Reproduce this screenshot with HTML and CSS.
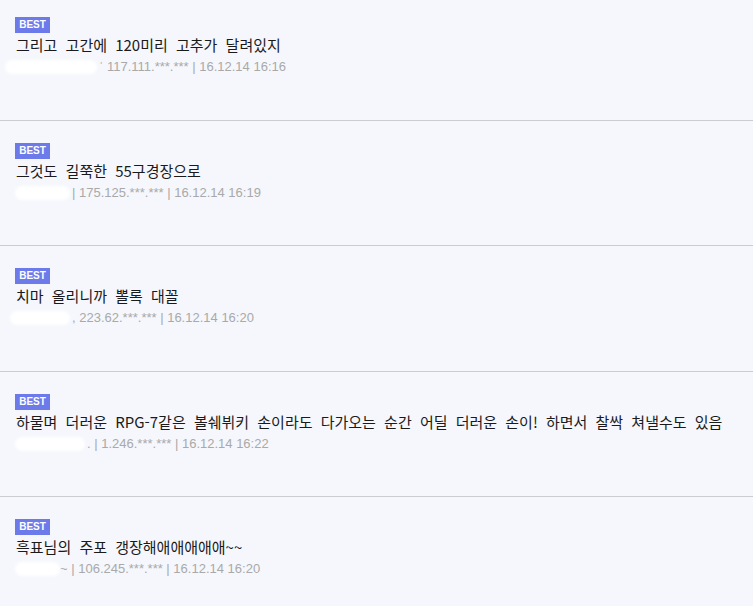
FILE: index.html
```html
<!DOCTYPE html>
<html lang="ko">
<head>
    <meta charset="UTF-8">
    <meta name="viewport" content="width=device-width, initial-scale=1.0">
    <title>베스트 댓글</title>
    <link rel="stylesheet" href="styles.css">
</head>
<body>
    <ul class="comments">
        <li class="comment">
            <span class="badge">BEST</span>
            <p class="text">그리고 고간에 120미리 고추가 달려있지</p>
            <div class="meta"><span class="nick nick-a"></span>ˈ 117.111.***.*** | 16.12.14 16:16</div>
        </li>
        <li class="comment">
            <span class="badge">BEST</span>
            <p class="text">그것도 길쭉한 55구경장으로</p>
            <div class="meta"><span class="nick nick-b"></span>| 175.125.***.*** | 16.12.14 16:19</div>
        </li>
        <li class="comment">
            <span class="badge">BEST</span>
            <p class="text">치마 올리니까 뽈록 대꼴</p>
            <div class="meta"><span class="nick nick-c"></span>, 223.62.***.*** | 16.12.14 16:20</div>
        </li>
        <li class="comment">
            <span class="badge">BEST</span>
            <p class="text">하물며 더러운 RPG-7같은 볼쉐뷔키 손이라도 다가오는 순간 어딜 더러운 손이! 하면서 찰싹 쳐낼수도 있음</p>
            <div class="meta"><span class="nick nick-d"></span>. | 1.246.***.*** | 16.12.14 16:22</div>
        </li>
        <li class="comment">
            <span class="badge">BEST</span>
            <p class="text">흑표님의 주포 갱장해애애애애애~~</p>
            <div class="meta"><span class="nick nick-e"></span>~ | 106.245.***.*** | 16.12.14 16:20</div>
        </li>
    </ul>
</body>
</html>
```

FILE: styles.css
```css
body {
    margin: 0;
    padding: 0;
    background-color: #f5f7fc;
    font-family: "Noto Sans CJK KR", "Noto Sans", sans-serif;
    overflow: hidden;
}
.comments {
    list-style: none;
    margin: -5px 0 0 0;
    padding: 0;
}
.comment {
    box-sizing: border-box;
    height: 125.5px;
    padding: 22px 16px 0 15px;
    border-bottom: 1px solid #c9ccd3;
}
.badge {
    display: block;
    width: 35px;
    height: 16px;
    line-height: 16px;
    text-align: center;
    background-color: #6c7be9;
    color: #ffffff;
    font-family: "Liberation Sans", Arial, sans-serif;
    font-size: 10px;
    font-weight: 700;
}
.text {
    margin: 3px 0 0 1px;
    font-size: 15px;
    line-height: 18px;
    word-spacing: 4px;
    color: #1a1a1a;
    white-space: nowrap;
}
.meta {
    margin-top: 4px;
    font-family: "Liberation Sans", Arial, sans-serif;
    font-size: 13px;
    line-height: 18px;
    color: #a9a9a9;
    white-space: nowrap;
}
.nick {
    display: inline-block;
    height: 14px;
    margin-right: 2px;
    vertical-align: -3px;
    background-color: #ffffff;
    border-radius: 7px;
    filter: blur(1.5px);
}
.nick-a { width: 92px; margin-left: -10px; }
.nick-b { width: 55px; }
.nick-c { width: 60px; margin-left: -5px; }
.nick-d { width: 70px; }
.nick-e { width: 45px; margin-right: 0; }
```
